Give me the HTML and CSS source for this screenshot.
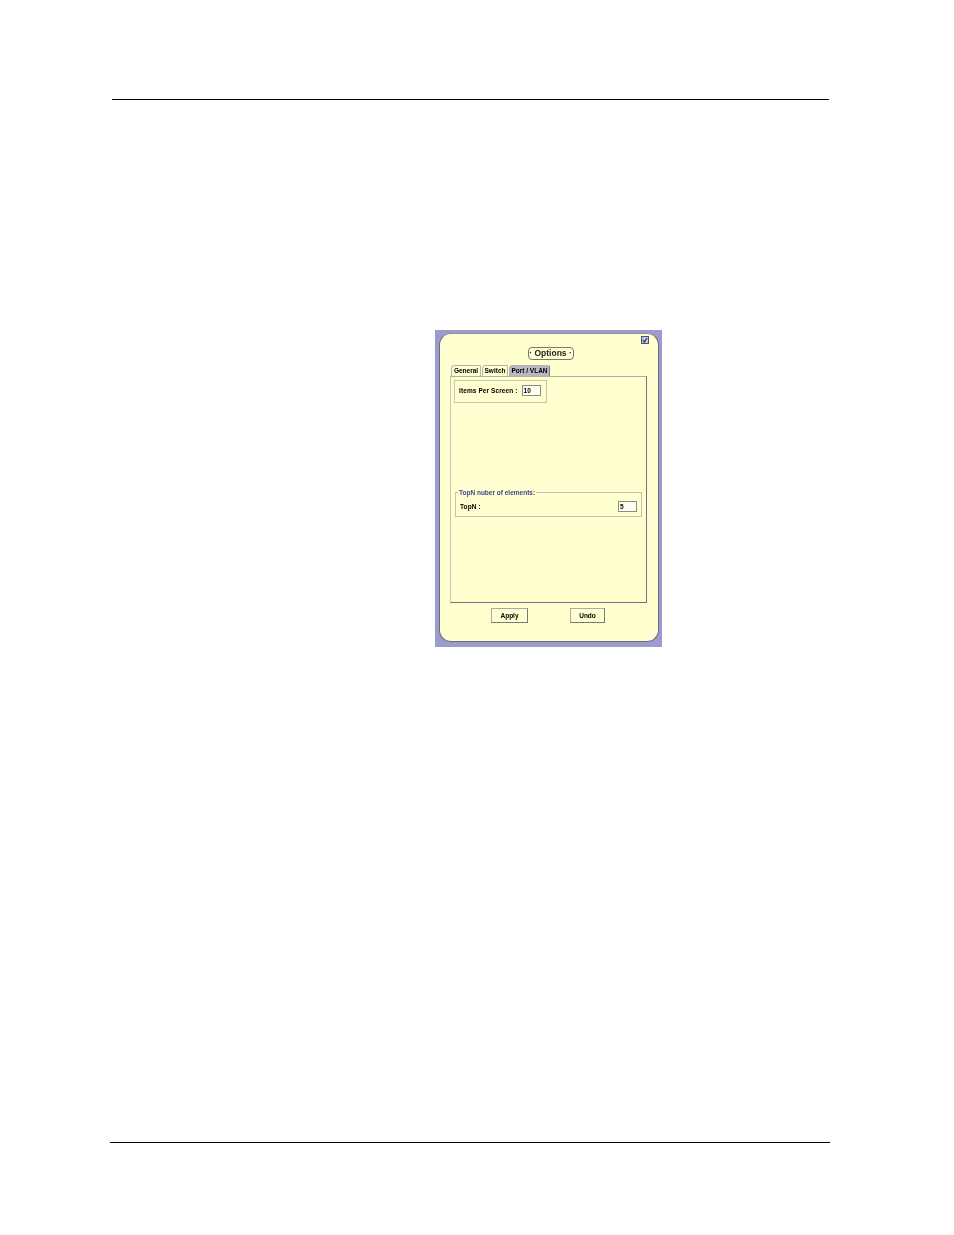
FILE: index.html
```html
<!DOCTYPE html>
<html lang="en">
<head>
    <meta charset="UTF-8">
    <title>Options</title>
    <link rel="stylesheet" href="styles.css">
</head>
<body>
    <div class="rule rule-top"></div>

    <div class="window">
        <div class="panel">
            <div class="close-row">
                <svg class="close-box" width="8" height="8" viewBox="0 0 8 8">
                    <rect x="0.5" y="0.5" width="7" height="7" fill="#c4cad8" stroke="#4a5270"/>
                    <path d="M2 4 L3.5 6 L6 2" fill="none" stroke="#39456f" stroke-width="1.4"/>
                </svg>
            </div>
            <div class="title-row"><span class="title">&middot; Options &middot;</span></div>

            <div class="tabs">
                <div class="tab tab-general">General</div>
                <div class="tab tab-switch">Switch</div>
                <div class="tab tab-port">Port / VLAN</div>
            </div>

            <div class="tab-body">
                <div class="items-box">
                    <span class="label">Items Per Screen :</span>
                    <span class="input">10</span>
                </div>

                <fieldset class="topn">
                    <legend>TopN nuber of elements:</legend>
                    <div class="topn-row">
                        <span class="label">TopN :</span>
                        <span class="input">5</span>
                    </div>
                </fieldset>
            </div>

            <div class="buttons">
                <div class="btn btn-apply">Apply</div>
                <div class="btn btn-undo">Undo</div>
            </div>
        </div>
    </div>

    <div class="rule rule-bottom"></div>
</body>
</html>
```

FILE: styles.css
```css
/* Page */
html, body {
    margin: 0;
    padding: 0;
    background: #fff;
}
body {
    height: 1235px;
    overflow: hidden;
    padding-top: 99px;
    box-sizing: border-box;
    font-family: "Liberation Sans", Arial, sans-serif;
    color: #000;
}
.rule {
    height: 1px;
    background: #000;
}
.rule-top {
    width: 717px;
    margin-left: 112px;
}
.rule-bottom {
    width: 720px;
    margin-left: 110px;
    margin-top: 495px;
}

/* Options window */
.window {
    width: 227px;
    height: 317px;
    margin-top: 230px;
    margin-left: 435px;
    padding: 3px 3px 5px 4px;
    box-sizing: border-box;
    background: #9c9ccc;
}
.panel {
    height: 100%;
    box-sizing: border-box;
    padding: 2px 11px 0 10px;
    background: #ffffd0;
    border-radius: 12px;
    border-right: 1px solid #6a6a80;
    border-bottom: 1px solid #6a6a80;
    border-left: 1px solid #6a6a80;
    border-top: 1px solid #9090a8;
    font-size: 6.5px;
    font-weight: bold;
    filter: blur(0.4px);
}
.close-row {
    display: flex;
    justify-content: flex-end;
    height: 8px;
    margin-right: -2px;
}
.title-row {
    display: flex;
    justify-content: center;
    margin-top: 3px;
}
.title {
    width: 46px;
    height: 13px;
    box-sizing: border-box;
    border: 1px solid #777;
    border-radius: 4px;
    font-size: 8.5px;
    line-height: 11px;
    text-align: center;
    white-space: nowrap;
    font-weight: bold;
    color: #222;
    margin-left: 4px;
}

/* Tabs */
.tabs {
    display: flex;
    gap: 1px;
    height: 11px;
    margin-top: 5px;
    margin-left: 1px;
}
.tab {
    height: 11px;
    box-sizing: border-box;
    border: 1px solid #b4b4a8;
    border-bottom: none;
    border-radius: 4px 2px 0 0;
    line-height: 10px;
    text-align: center;
    white-space: nowrap;
}
.tab-general { width: 30px; }
.tab-switch { width: 26px; }
.tab-port {
    width: 41px;
    background: #b8b8c0;
    border-right: 1px solid #77778f;
}
.tab-body {
    height: 227px;
    box-sizing: border-box;
    padding: 3px 3px 0 3px;
    border-top: 1px solid #b0b0a8;
    border-left: 1px solid #c8c8b8;
    border-right: 1px solid #70708c;
    border-bottom: 1px solid #70708c;
}
.items-box {
    display: flex;
    align-items: center;
    width: 93px;
    height: 23px;
    box-sizing: border-box;
    padding-left: 4px;
    padding-bottom: 2px;
    border: 1px solid #c4c4b0;
}
.label {
    white-space: nowrap;
    letter-spacing: 0.1px;
}
.input {
    display: block;
    width: 19px;
    height: 11px;
    box-sizing: border-box;
    border: 1px solid #8c8c84;
    background: #fffff0;
    padding-left: 1px;
    line-height: 10px;
}
.items-box .input {
    margin-left: 4px;
}
.topn {
    width: 187px;
    height: 29px;
    box-sizing: border-box;
    margin: 85px 0 0 1px;
    padding: 0 4px 0 4px;
    border: 1px solid #c4c4b0;
    min-width: 0;
}
.topn legend {
    padding: 0 1px;
    margin-left: -2px;
    color: #44448c;
    line-height: 9px;
}
.topn-row {
    display: flex;
    justify-content: space-between;
    align-items: center;
    height: 11px;
    margin-top: 4px;
}

/* Buttons */
.buttons {
    display: flex;
    height: 15px;
    margin-top: 5px;
    margin-left: 41px;
}
.btn {
    height: 15px;
    box-sizing: border-box;
    border: 1px solid #aaa;
    border-right-color: #777;
    border-bottom-color: #777;
    line-height: 13px;
    text-align: center;
}
.btn-apply { width: 37px; }
.btn-undo {
    width: 35px;
    margin-left: 42px;
}
```
